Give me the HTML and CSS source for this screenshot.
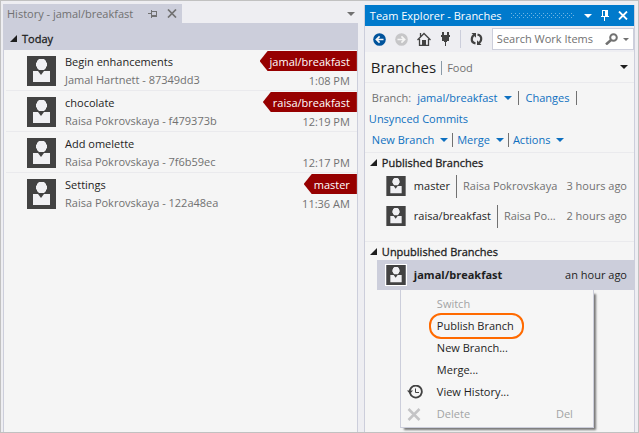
FILE: index.html
```
<!DOCTYPE html>
<html lang="en">
<head>
<meta charset="utf-8">
<title>Team Explorer - Branches</title>
<link rel="stylesheet" href="styles.css">
</head>
<body>
<svg class="defs" aria-hidden="true">
  <symbol id="person" viewBox="0 0 29 30">
    <path fill="#424242" d="M0 0h29v30H0z"/>
    <path fill="#f0f0f3" d="M12 3h5l2 2v1l1 1v3l-1 1v1l-2 2h-5l-2-2v-1l-1-1V7l1-1V5zM6 15h5l3 4 3-4h6v11H6z"/>
  </symbol>
  <symbol id="caret" viewBox="0 0 8 4"><path fill="currentColor" d="M0 0h8L4 4z"/></symbol>
  <symbol id="expanded" viewBox="0 0 7 7"><path fill="#1e1e1e" d="M7 0v7H0z"/></symbol>
</svg>
<div class="window">
  <section class="history">
    <div class="tabs">
      <div class="tab">
        <span class="tab-name">History - jamal/breakfast</span>
        <button class="plain" aria-label="Pin"><svg width="9" height="8" viewBox="0 0 9 8"><path fill="#717171" d="M0 3h3V0h1v1h5v6H4v1H3V4H0zM4 2v3h4V2z"/></svg></button>
        <button class="plain" aria-label="Close tab"><svg width="10" height="9" viewBox="0 0 10 9"><path stroke="#717171" stroke-width="1.7" d="M1 .5l8 8M9 .5l-8 8"/></svg></button>
      </div>
      <button class="plain tab-list" aria-label="Open tabs"><svg width="8" height="4"><use href="#caret"/></svg></button>
    </div>
    <div class="history-body">
      <h2 class="day"><svg width="7" height="7"><use href="#expanded"/></svg>Today</h2>
      <ul class="commits">
        <li class="commit">
          <svg class="avatar"><use href="#person"/></svg>
          <div class="commit-text"><span class="message">Begin enhancements</span><span class="author">Jamal Hartnett - 87349dd3</span></div>
          <div class="commit-side"><span class="tag">jamal/breakfast</span><time>1:08 PM</time></div>
        </li>
        <li class="commit">
          <svg class="avatar"><use href="#person"/></svg>
          <div class="commit-text"><span class="message">chocolate</span><span class="author">Raisa Pokrovskaya - f479373b</span></div>
          <div class="commit-side"><span class="tag">raisa/breakfast</span><time>12:19 PM</time></div>
        </li>
        <li class="commit">
          <svg class="avatar"><use href="#person"/></svg>
          <div class="commit-text"><span class="message">Add omelette</span><span class="author">Raisa Pokrovskaya - 7f6b59ec</span></div>
          <div class="commit-side"><time>12:17 PM</time></div>
        </li>
        <li class="commit">
          <svg class="avatar"><use href="#person"/></svg>
          <div class="commit-text"><span class="message">Settings</span><span class="author">Raisa Pokrovskaya - 122a48ea</span></div>
          <div class="commit-side"><span class="tag">master</span><time>11:36 AM</time></div>
        </li>
      </ul>
    </div>
  </section>

  <section class="explorer">
    <header class="titlebar">
      <span>Team Explorer - Branches</span>
      <span class="grip"></span>
      <button class="plain" aria-label="Window options"><svg width="8" height="4"><use href="#caret"/></svg></button>
      <button class="plain" aria-label="Auto hide"><svg width="8" height="11" viewBox="0 0 8 11"><path fill="#fff" d="M1 0h6v6h1v1H4v4H3V7H0V6h1zM2 1v5h2V1z"/></svg></button>
      <button class="plain" aria-label="Close"><svg width="10" height="9" viewBox="0 0 10 9"><path stroke="#fff" stroke-width="1.8" d="M1 .5l8 8M9 .5l-8 8"/></svg></button>
    </header>
    <div class="toolbar">
      <button class="plain" aria-label="Back"><svg width="13" height="13" viewBox="0 0 13 13"><circle cx="6.500" cy="6.500" r="6.300" fill="#00539c"/><path fill="none" stroke="#f5f5f5" stroke-width="1.700" d="M10.500 6.500H4M6.600 3.300L3.400 6.500l3.200 3.200"/></svg></button>
      <button class="plain" aria-label="Forward"><svg width="13" height="13" viewBox="0 0 13 13"><circle cx="6.500" cy="6.500" r="6.300" fill="#c6c6c8"/><path fill="none" stroke="#f5f5f5" stroke-width="1.700" d="M2.500 6.500H9M6.400 3.300l3.200 3.200-3.200 3.200"/></svg></button>
      <button class="plain" aria-label="Home"><svg width="14" height="14" viewBox="0 0 14 14"><path fill="none" stroke="#424242" stroke-width="1.300" d="M.5 8L7 1.500 13.500 8M2.500 7v6.300h9V7M3.500 4.500V1"/><path fill="#424242" d="M5 8h4v6H5z"/></svg></button>
      <button class="plain" aria-label="Connect"><svg class="plug" width="9" height="14" viewBox="0 0 9 14"><path fill="#424242" d="M1 0h2v3h3V0h2v3h1v2H8v4H6v1H5v4H4v-4H3V9H1V5H0V3h1z"/></svg></button>
      <span class="tool-sep"></span>
      <button class="plain" aria-label="Refresh"><svg width="13" height="12" viewBox="0 0 13 12"><path fill="none" stroke="#424242" stroke-width="2.200" d="M5.500 10.500Q1.500 9.500 1.800 6q.2-3 2.700-4.300M7.500 1.500Q11.500 2.500 11.200 6q-.2 3-2.700 4.300"/><path fill="#424242" d="M1.500 0H6v4.700zM11.500 12H7V7.300z"/></svg></button>
      <div class="search">
        <input type="text" aria-label="Search Work Items" placeholder="Search Work Items">
        <button class="plain" aria-label="Search"><svg width="13" height="12" viewBox="0 0 13 12"><circle cx="8.500" cy="4.500" r="3.300" fill="none" stroke="#717171" stroke-width="2"/><path stroke="#717171" stroke-width="2.500" d="M6 7l-5 4.500"/></svg></button>
        <button class="plain" aria-label="Search options"><svg class="small-caret"><use href="#caret"/></svg></button>
      </div>
    </div>
    <div class="heading">
      <h1>Branches</h1><span class="bar"></span><span class="project">Food</span>
      <button class="plain" aria-label="Change page"><svg width="8" height="4"><use href="#caret"/></svg></button>
    </div>
    <nav class="actions">
      <div class="action-row">
        <span class="label">Branch:</span><a href="#">jamal/breakfast<svg width="8" height="4"><use href="#caret"/></svg></a><span class="sep"></span><a href="#" class="roomy">Changes</a><span class="sep"></span>
      </div>
      <div class="action-row outdent"><a href="#">Unsynced Commits</a></div>
      <div class="action-row tight">
        <a href="#">New Branch<svg width="8" height="4"><use href="#caret"/></svg></a><span class="sep"></span><a href="#">Merge<svg width="8" height="4"><use href="#caret"/></svg></a><span class="sep"></span><a href="#">Actions<svg width="8" height="4"><use href="#caret"/></svg></a>
      </div>
    </nav>
    <section class="group published">
      <h2><svg width="7" height="7"><use href="#expanded"/></svg>Published Branches</h2>
      <div class="branch"><svg class="face"><use href="#person"/></svg><span class="name">master</span><span class="rule"></span><span class="owner">Raisa Pokrovskaya</span><time>3 hours ago</time></div>
      <div class="branch"><svg class="face"><use href="#person"/></svg><span class="name">raisa/breakfast</span><span class="rule"></span><span class="owner">Raisa Po...</span><time>2 hours ago</time></div>
    </section>
    <section class="group">
      <h2><svg width="7" height="7"><use href="#expanded"/></svg>Unpublished Branches</h2>
      <div class="branch selected">
        <svg class="face"><use href="#person"/></svg><span class="name">jamal/breakfast</span><time>an hour ago</time>
        <div class="menu" role="menu">
          <button role="menuitem" disabled><i></i><span>Switch</span></button>
          <button role="menuitem" class="marked"><i></i><span>Publish Branch</span></button>
          <button role="menuitem"><i></i><span>New Branch...</span></button>
          <button role="menuitem"><i></i><span>Merge...</span></button>
          <button role="menuitem"><i><svg width="16" height="14" viewBox="0 0 16 14"><path fill="none" stroke="#424242" stroke-width="1.800" d="M3 8a6 6 0 1 0 1-5L2.500 6"/><path fill="#424242" d="M0 5.500h6L3 9z"/><path fill="none" stroke="#424242" d="M8.500 3.500v4H12"/></svg></i><span>View History...</span></button>
          <button role="menuitem" disabled><i><svg width="14" height="13" viewBox="0 0 14 13"><path stroke="#c4c4c6" stroke-width="2.500" d="M1.500 1l11 11M12.500 1l-11 11"/></svg></i><span>Delete</span><kbd>Del</kbd></button>
        </div>
      </div>
    </section>
  </section>
</div>
</body>
</html>
```
FILE: styles.css
```
* { box-sizing: border-box; }

body {
  margin: 0;
  color: #1e1e1e;
  font: 11px/18px "Open Sans", "Noto Sans", sans-serif;
}

h1, h2, ul { margin: 0; padding: 0; font: inherit; }
ul { list-style: none; }
svg { display: block; flex: none; }
.defs { position: absolute; width: 0; height: 0; }
button, input { font: inherit; color: inherit; }
.plain { display: block; flex: none; padding: 0; border: 0; background: none; }
a { color: #0e70c0; text-decoration: none; }

.window {
  display: flex;
  gap: 6px;
  min-height: 100vh;
  padding: 3px 3px 0 2px;
  border: 1px solid #c1c1c1;
  background: #eeeef2;
}

/* History tool window */
.history { display: flex; flex: 356 1 0; flex-direction: column; min-width: 0; }
.tabs { display: flex; align-items: center; height: 19px; }
.tab {
  display: flex;
  align-items: center;
  height: 19px;
  padding: 0 5px 0 4px;
  color: #717171;
  background: #cccedb;
}
.tab-name { padding-right: 5px; }
.tab button { margin-left: 10px; }
.tab-list { margin-left: auto; margin-right: 3px; color: #717171; }
.history-body { flex: 1; border: 1px solid #cccedb; border-width: 0 1px; background: #f5f5f5; }
.day {
  display: flex;
  align-items: center;
  gap: 5px;
  height: 27px;
  padding: 4px 6px 0;
  background: #cccedb;
}
.day, .group h2 { -webkit-text-stroke: 0.3px; }
.commits { padding: 0 0 0 2px; }
.commit { display: flex; height: 41px; border-bottom: 1px solid #eaeaed; }
.commit:last-child { border: 0; }
.avatar { width: 29px; height: 30px; margin: 6px 9px 0 21px; }
.commit-text, .commit-side { display: flex; flex-direction: column; }
.commit-text { flex: 1; padding-top: 3px; }
.author, .commit time { color: #717171; }
.message, .author { white-space: nowrap; }
.commit-side { align-items: flex-end; justify-content: space-between; padding-top: 1px; }
.commit time { margin-top: auto; padding-right: 7px; }
.commit:last-child .commit-side { padding-bottom: 1px; }
.tag {
  height: 20px;
  padding: 2px 7px 0 10px;
  color: #fff;
  background: #960000;
  clip-path: polygon(0 50%, 8px 0, 100% 0, 100% 100%, 8px 100%);
}

/* Team Explorer tool window */
.explorer {
  flex: 270 1 0;
  min-width: 0;
  margin-top: 1px;
  border: 1px solid #cccedb;
  border-width: 0 1px;
  background: #f5f5f5;
}
.titlebar {
  display: flex;
  align-items: center;
  gap: 9px;
  height: 21px;
  padding: 0 6px 0 5px;
  color: #fff;
  background: #007acc;
}
.titlebar > span:first-child { white-space: nowrap; }
.grip {
  flex: 1;
  height: 5px;
  background:
    conic-gradient(at 1px 1px, transparent 75%, #70b5e3 0) 0 0 / 4px 4px,
    conic-gradient(at 1px 1px, transparent 75%, #70b5e3 0) 2px 2px / 4px 4px;
}
.toolbar {
  display: flex;
  align-items: center;
  gap: 9px;
  height: 26px;
  padding-left: 8px;
  background: #eeeef2;
}
.plug { margin: 0 1px; }
.tool-sep { width: 1px; height: 18px; background: #cccedb; }
.search {
  display: flex;
  flex: 1;
  align-items: center;
  gap: 5px;
  height: 22px;
  min-width: 0;
  padding-right: 4px;
  border: 1px solid #cccedb;
  background: #fff;
}
.search input { flex: 1; min-width: 0; padding: 0 0 0 4px; border: 0; outline: 0; background: none; }
.search input::placeholder { color: #717171; opacity: 1; }
.search button { color: #717171; }
.small-caret { width: 6px; height: 3px; }

.heading {
  display: flex;
  align-items: center;
  height: 31px;
  padding: 0 6px;
  border-bottom: 1px solid #eaeaed;
}
.heading h1 { font-size: 15px; line-height: 24px; }
.bar { width: 1px; height: 14px; margin: 2px 5px 0; background: #8a9aa8; }
.project { padding-top: 2px; color: #717171; }
.heading button { margin-left: auto; }

.actions { padding: 4px 7px 2px; border-bottom: 1px solid #eaeaed; }
.action-row { display: flex; align-items: center; gap: 6px; height: 21px; white-space: nowrap; }
.action-row a { display: flex; align-items: center; gap: 6px; }
.action-row .roomy { padding: 0 1px; }
.outdent { margin-left: -3px; }
.tight { gap: 4px; }
.label { color: #717171; }
.sep { width: 1px; height: 14px; background: #717171; }

.group h2 { display: flex; align-items: center; gap: 5px; height: 18px; padding: 1px 5px 0; }
.published { height: 89px; border-bottom: 1px solid #eaeaed; }
.branch {
  display: flex;
  align-items: center;
  height: 30px;
  margin-left: 12px;
  padding: 0 7px 0 9px;
  white-space: nowrap;
}
.face { width: 20px; height: 20px; }
.name { margin-left: 8px; }
.rule { flex: none; width: 1px; height: 23px; margin: 0 6px; background: #717171; }
.owner { color: #717171; }
.branch time { margin-left: auto; color: #717171; }
.selected { position: relative; background: #cccedb; }
.selected .face { outline: 1px solid #fff; }
.selected .name { font-weight: 700; }
.selected time { color: #1e1e1e; }

.menu {
  position: absolute;
  top: 100%;
  left: 23px;
  width: 194px;
  padding: 3px 0 2px;
  border: 1px solid #cccedb;
  border-top: 0;
  background: #f6f6f6;
  box-shadow: 3px 3px 2px -1px #777;
}
.menu button {
  display: flex;
  align-items: center;
  width: 100%;
  height: 22px;
  padding: 0 20px 0 6px;
  border: 0;
  background: none;
  text-align: left;
}
.menu button:disabled { color: #a2a4a5; }
.menu i { flex: none; width: 24px; }
.menu span { padding: 2px 8px 2px 6px; }
.menu kbd { margin-left: auto; font: inherit; }
.menu .marked span { outline: 2px solid #ff6a00; border-radius: 10px; }
```
